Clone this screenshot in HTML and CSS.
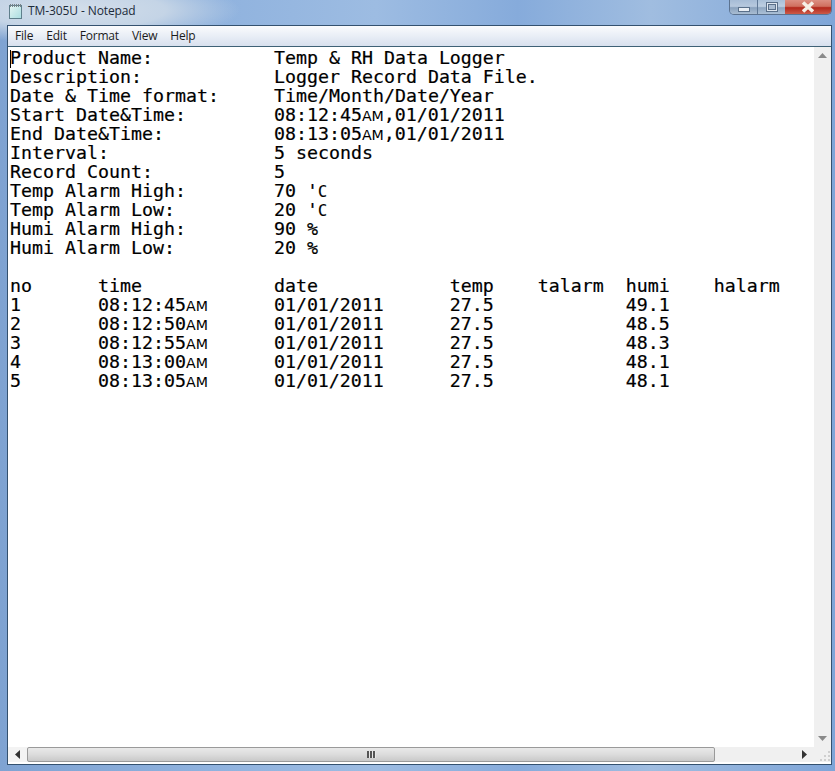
FILE: index.html
```html
<!DOCTYPE html>
<html lang="en">
<head>
<meta charset="utf-8">
<title>TM-305U - Notepad</title>
<link rel="stylesheet" href="styles.css">
</head>
<body>
<div class="window">
  <header class="titlebar">
    <div class="title-left">
      <svg class="app-icon" width="15" height="16" viewBox="0 0 15 16">
        <defs>
          <linearGradient id="pad" x1="0" y1="0" x2="1" y2="1">
            <stop offset="0" stop-color="#e6f6f4"/>
            <stop offset="1" stop-color="#a9dce0"/>
          </linearGradient>
        </defs>
        <rect x="1.5" y="2.5" width="12" height="13" fill="url(#pad)" stroke="#5f7f8c"/>
        <path d="M2.5 1v3M4.5 1v3M6.5 1v3M8.5 1v3M10.5 1v3M12.5 1v3" stroke="#77838a" stroke-width="1"/>
      </svg>
      <span class="title-text">TM-305U - Notepad</span>
    </div>
    <div class="caption">
      <div class="cap cap-min"><span class="min-glyph"></span></div>
      <div class="cap cap-max"><span class="max-glyph"></span></div>
      <div class="cap cap-close">
        <svg width="18" height="12" viewBox="0 0 18 12"><path d="M4 1.5l10 9M14 1.5l-10 9" stroke="#f6efe6" stroke-width="3.6"/></svg>
      </div>
    </div>
  </header>
  <div class="client">
    <nav class="menu">
      <span class="menu-item">File</span>
      <span class="menu-item">Edit</span>
      <span class="menu-item">Format</span>
      <span class="menu-item">View</span>
      <span class="menu-item">Help</span>
    </nav>
    <div class="main">
      <div class="editor"><span class="caret"></span><pre class="doc">Product Name:           Temp &amp; RH Data Logger
Description:            Logger Record Data File.
Date &amp; Time format:     Time/Month/Date/Year
Start Date&amp;Time:        08:12:45<span class="am">AM</span>,01/01/2011
End Date&amp;Time:          08:13:05<span class="am">AM</span>,01/01/2011
Interval:               5 seconds
Record Count:           5
Temp Alarm High:        70 '<span class="unit">C</span>
Temp Alarm Low:         20 '<span class="unit">C</span>
Humi Alarm High:        90 %
Humi Alarm Low:         20 %

no      time            date            temp    talarm  humi    halarm
1       08:12:45<span class="am">AM</span>      01/01/2011      27.5            49.1
2       08:12:50<span class="am">AM</span>      01/01/2011      27.5            48.5
3       08:12:55<span class="am">AM</span>      01/01/2011      27.5            48.3
4       08:13:00<span class="am">AM</span>      01/01/2011      27.5            48.1
5       08:13:05<span class="am">AM</span>      01/01/2011      27.5            48.1</pre></div>
      <div class="vscroll">
        <svg width="9" height="5" viewBox="0 0 9 5"><path d="M4.5 0L9 5H0z" fill="#8a8a8a"/></svg>
        <svg width="9" height="5" viewBox="0 0 9 5"><path d="M4.5 5L9 0H0z" fill="#8a8a8a"/></svg>
      </div>
    </div>
    <div class="bottom">
      <div class="hscroll">
        <div class="hbtn">
          <svg width="5" height="9" viewBox="0 0 5 9"><path d="M0 4.5L5 0V9z" fill="#333"/></svg>
        </div>
        <div class="thumb"><span class="grip"></span></div>
        <div class="htrack">
          <svg width="5" height="9" viewBox="0 0 5 9"><path d="M5 4.5L0 0V9z" fill="#333"/></svg>
        </div>
      </div>
      <div class="corner">
        <svg width="12" height="12" viewBox="0 0 12 12"><path d="M9 1h2v2H9zM9 5h2v2H9zM5 5h2v2H5zM9 9h2v2H9zM5 9h2v2H5zM1 9h2v2H1z" fill="#cfcfcf"/></svg>
      </div>
    </div>
  </div>
</div>
</body>
</html>
```
FILE: styles.css
```css
* { box-sizing: border-box; }
html, body { margin: 0; padding: 0; }
body { width: 835px; height: 771px; overflow: hidden; }
.window {
  width: 835px;
  height: 771px;
  display: flex;
  flex-direction: column;
  background:
    radial-gradient(ellipse 165px 34px at 75px 10px, #d3deea 0%, #c4d4e6 55%, rgba(160, 190, 226, 0) 100%),
    linear-gradient(90deg, #7fa3d2 0%, #8fb2de 25%, #9dbce2 45%, #86abdb 62%, #a0bde0 78%, #7ea5d8 100%);
}
.titlebar {
  height: 25px;
  display: flex;
  justify-content: space-between;
  align-items: flex-start;
  padding-left: 8px;
  padding-right: 3px;
}
.title-left {
  display: flex;
  align-items: center;
  gap: 5px;
  height: 22px;
}
.app-icon { display: block; }
.title-text {
  font: 12px/16px "Open Sans", sans-serif;
  letter-spacing: -0.1px;
  color: #1c2b3a;
}
.caption {
  display: flex;
  height: 15px;
  border: 1px solid #5c7390;
  border-top: none;
  border-radius: 0 0 5px 5px;
  overflow: hidden;
}
.cap {
  display: flex;
  align-items: center;
  justify-content: center;
  height: 100%;
}
.cap-min {
  width: 28px;
  background: linear-gradient(#a6bcd6, #b7c9de 45%, #8aa2be 55%, #a9bdd2);
  border-right: 1px solid #5f7896;
}
.cap-max {
  width: 27px;
  background: linear-gradient(#a9c0d9, #bdcfe2 45%, #8fa7c2 55%, #abc0d6);
}
.cap-close {
  width: 46px;
  background: linear-gradient(#dc8f82, #d0705f 45%, #b3281b 55%, #cc5a48);
}
.min-glyph {
  width: 12px;
  height: 5px;
  margin-top: 5px;
  background: #e9eef4;
  border: 1px solid #5a708a;
}
.max-glyph {
  width: 12px;
  height: 10px;
  border: 1px solid #5a708a;
  background: #dfe7f0;
  display: flex;
  align-items: center;
  justify-content: center;
}
.max-glyph::after {
  content: "";
  width: 6px;
  height: 4px;
  background: #a9bcd1;
  border: 1px solid #5a708a;
}
.client {
  flex: 1;
  margin: 0 3px 6px 7px;
  padding-bottom: 2px;
  display: flex;
  flex-direction: column;
  background: #fff;
  border: 1px solid #34516f;
  min-height: 0;
}
.menu {
  height: 21px;
  flex: none;
  display: flex;
  align-items: center;
  gap: 13px;
  padding-left: 7px;
  background: linear-gradient(#fafbfd, #e9eef6 50%, #d8e0ee);
  border-bottom: 1px solid #3f6176;
  font: 12px/16px "Open Sans", sans-serif;
  letter-spacing: -0.2px;
  color: #1b1b1b;
}
.main { flex: 1; display: flex; min-height: 0; }
.editor {
  flex: 1;
  position: relative;
  padding: 1px 0 0 2px;
  overflow: hidden;
}
.caret {
  position: absolute;
  left: 2px;
  top: 3px;
  width: 1px;
  height: 18px;
  background: #000;
}
.doc {
  margin: 0;
  font: 18.27px/19px "DejaVu Sans Mono", monospace;
  -webkit-text-stroke: 0.2px #000;
  color: #000;
}
.am {
  font-family: "DejaVu Sans", sans-serif;
  font-size: 14.2px;
  line-height: 1;
  -webkit-text-stroke: 0;
}
.unit {
  font-size: 15px;
  line-height: 1;
}
.vscroll {
  width: 17px;
  flex: none;
  background: #f0f0f0;
  display: flex;
  flex-direction: column;
  justify-content: space-between;
  align-items: center;
  padding: 6px 0 6px;
}
.vscroll svg { display: block; }
.bottom {
  height: 15px;
  flex: none;
  display: flex;
}
.hscroll { flex: 1; display: flex; background: #f0f0f0; }
.hbtn {
  width: 19px;
  display: flex;
  align-items: center;
  justify-content: center;
  background: #f3f3f3;
}
.thumb {
  width: 688px;
  display: flex;
  align-items: center;
  justify-content: center;
  background: linear-gradient(#e9e9e9, #dcdcdc 50%, #c9c9c9);
  border: 1px solid #9a9a9a;
  border-radius: 2px;
}
.grip {
  width: 9px;
  height: 7px;
  background: repeating-linear-gradient(90deg, #555 0 2px, #e8e8e8 2px 3px);
}
.htrack {
  flex: 1;
  display: flex;
  align-items: center;
  justify-content: flex-end;
  padding-right: 7px;
}
.corner {
  width: 17px;
  background: #f0f0f0;
  display: flex;
  align-items: flex-end;
  justify-content: flex-end;
}
```
